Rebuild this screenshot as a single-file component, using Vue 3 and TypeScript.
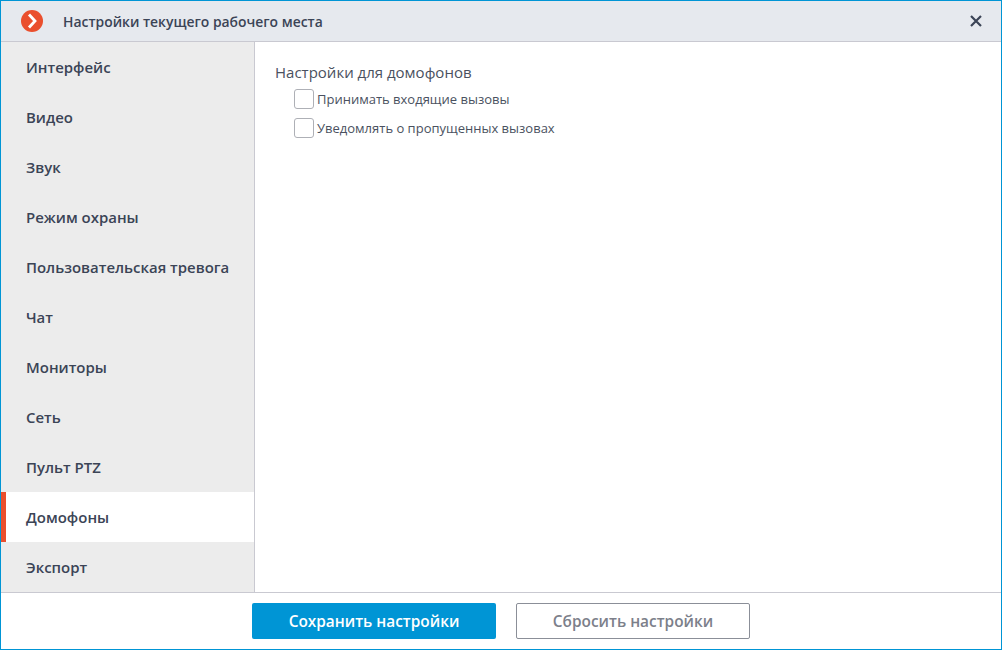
<script setup lang="ts">
const sections = [
  "Интерфейс",
  "Видео",
  "Звук",
  "Режим охраны",
  "Пользовательская тревога",
  "Чат",
  "Мониторы",
  "Сеть",
  "Пульт PTZ",
  "Домофоны",
  "Экспорт",
];
const active = "Домофоны";
const options = ["Принимать входящие вызовы", "Уведомлять о пропущенных вызовах"];
</script>

<template>
  <div class="window">
    <header class="titlebar">
      <svg class="logo" width="22" height="22" viewBox="0 0 22 22">
        <circle cx="11" cy="11" r="11" fill="#ea4f2d" />
        <path d="M8 4.5 L14 11 L8 17.5" fill="none" stroke="#fff" stroke-width="2.8" />
      </svg>
      <h1 class="title">Настройки текущего рабочего места</h1>
      <svg class="close" width="12" height="12" viewBox="0 0 12 12">
        <path d="M1 1 L11 11 M11 1 L1 11" stroke="#3b4456" stroke-width="2.2" />
      </svg>
    </header>
    <div class="body">
      <nav class="sidebar">
        <div
          v-for="s in sections"
          :key="s"
          class="nav-item"
          :class="{ 'is-active': s === active }"
        >
          {{ s }}
        </div>
      </nav>
      <main class="content">
        <p class="heading">Настройки для домофонов</p>
        <label v-for="o in options" :key="o" class="option">
          <span class="box"></span>
          <span>{{ o }}</span>
        </label>
      </main>
    </div>
    <footer class="footer">
      <button class="btn btn-primary">Сохранить настройки</button>
      <button class="btn btn-secondary">Сбросить настройки</button>
    </footer>
  </div>
</template>

<style scoped>
.window {
  display: flex;
  flex-direction: column;
  width: 1002px;
  height: 650px;
  box-sizing: border-box;
  border: 1px solid #0095d5;
  background: #fff;
  font-family: "Open Sans", "Noto Sans", sans-serif;
  color: #3b4456;
}
.titlebar {
  display: flex;
  align-items: center;
  flex-shrink: 0;
  height: 41px;
  box-sizing: border-box;
  padding: 0 19px 0 20px;
  background: #e6e9ee;
  border-bottom: 1px solid #c9c9d1;
}
.logo {
  flex-shrink: 0;
}
.title {
  flex: 1;
  margin: 0 0 0 20px;
  font-size: 13.9px;
  font-weight: 600;
}
.close {
  flex-shrink: 0;
}
.body {
  display: flex;
  flex: 1;
  min-height: 0;
}
.sidebar {
  flex-shrink: 0;
  width: 254px;
  box-sizing: border-box;
  background: #ececec;
  border-right: 1px solid #c9c9d1;
}
.nav-item {
  display: flex;
  align-items: center;
  height: 50px;
  box-sizing: border-box;
  padding-left: 25px;
  font-size: 14.95px;
  font-weight: 600;
}
.is-active {
  background: #fff;
  border-left: 5px solid #ea4f2d;
  padding-left: 20px;
}
.content {
  flex: 1;
  padding: 20px 20px;
}
.heading {
  margin: 0 0 2px;
  font-size: 15px;
  line-height: 20px;
  color: #4a5160;
}
.option {
  display: flex;
  align-items: center;
  height: 29px;
  padding-left: 19px;
  font-size: 13px;
  color: #4a5160;
}
.box {
  width: 18px;
  height: 18px;
  margin-right: 3px;
  border: 1px solid #aeb0b6;
  border-radius: 3px;
  background: #fff;
}
.footer {
  display: flex;
  justify-content: center;
  gap: 20px;
  flex-shrink: 0;
  height: 57px;
  box-sizing: border-box;
  padding-top: 10px;
  border-top: 1px solid #c9c9d1;
}
.btn {
  height: 36px;
  box-sizing: border-box;
  padding: 1px 0 0;
  border-radius: 2px;
  font-family: inherit;
  font-size: 15.4px;
  font-weight: 600;
}
.btn-primary {
  width: 244px;
  border: none;
  background: #0095d5;
  color: #fff;
}
.btn-secondary {
  width: 234px;
  border: 1px solid #8b8f98;
  background: #fff;
  color: #7c808a;
}
</style>
